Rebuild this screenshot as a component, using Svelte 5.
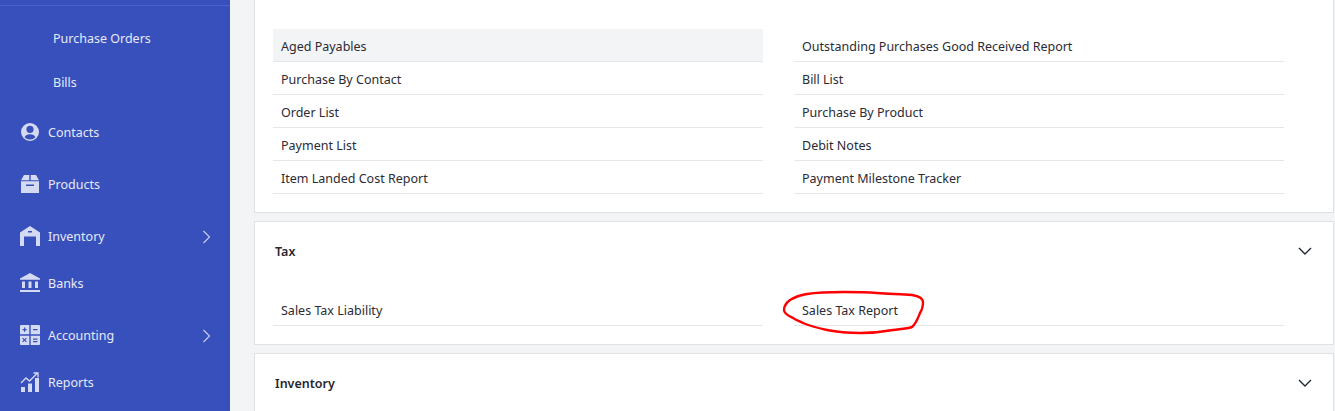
<script>
  const submenu = ['Purchase Orders', 'Bills'];
  const left = ['Aged Payables', 'Purchase By Contact', 'Order List', 'Payment List', 'Item Landed Cost Report'];
  const right = ['Outstanding Purchases Good Received Report', 'Bill List', 'Purchase By Product', 'Debit Notes', 'Payment Milestone Tracker'];
</script>

{#snippet chevron()}
  <svg class="chev" width="16" height="10" viewBox="0 0 16 10" fill="none"><path d="M2 2l6 6 6-6" stroke="#1f2937" stroke-width="1.4"/></svg>
{/snippet}

{#snippet arrow()}
  <svg class="arrow" width="10" height="14" viewBox="0 0 10 14" fill="none"><path d="M2.5 1l6 6-6 6" stroke="#c3cbf0" stroke-width="1.2"/></svg>
{/snippet}

<div class="page">
  <aside class="side">
    <div class="rule"></div>
    <div class="sub">
      {#each submenu as s}<div class="subitem">{s}</div>{/each}
    </div>
    <div class="item first">
      <svg class="ico" viewBox="0 0 20 20"><path fill-rule="evenodd" d="M10 1a9 9 0 1 1 0 18 9 9 0 0 1 0-18zm0 2.700a3.600 3.600 0 1 0 0 7.200 3.600 3.600 0 0 0 0-7.200zM4.600 15.300A7 7 0 0 0 10 17.600a7 7 0 0 0 5.400-2.300c-.7-1.800-2.800-3-5.400-3s-4.700 1.200-5.400 3z"/></svg>
      <span>Contacts</span>
    </div>
    <div class="item gap">
      <svg class="ico" viewBox="0 0 20 20"><path fill-rule="evenodd" d="M4 1h5.300v5.200H1zM10.700 1H16l3 5.200h-8.300zM1 7.300h18V19H1zM6 10.500v1.400h8v-1.400z"/></svg>
      <span>Products</span>
    </div>
    <div class="item gap">
      <svg class="ico" viewBox="0 0 20 20"><path fill-rule="evenodd" d="M10 0l10 6.500V20h-4V10.500H4V20H0V6.500zM8 5v1.400h4V5z"/></svg>
      <span>Inventory</span>{@render arrow()}
    </div>
    <div class="item">
      <svg class="ico" viewBox="0 0 20 20"><path fill-rule="evenodd" d="M10 0l10 5.500v1.300H0V5.500zM2 8.500h3V15H2zM8.500 8.500h3V15h-3zM15 8.500h3V15h-3zM0 17h20v2H0z"/></svg>
      <span>Banks</span>
    </div>
    <div class="item gap">
      <svg class="ico" viewBox="0 0 20 20"><path fill-rule="evenodd" d="M1 0h8.300v9.300H0V1a1 1 0 0 1 1-1zM10.700 0H19a1 1 0 0 1 1 1v8.300h-9.300zM0 10.700h9.300V20H1a1 1 0 0 1-1-1zM10.700 10.700H20V19a1 1 0 0 1-1 1h-8.300zM4 2.500v1.500H2.500v1.200H4v1.500h1.200V5.200h1.500V4H5.200V2.500zM13 4v1.200h4.500V4zM3 12.700l-.8.800 1.500 1.500-1.500 1.500.8.800 1.500-1.500 1.500 1.500.8-.8L5.300 15l1.500-1.500-.8-.8-1.500 1.500zM13 13.500v1.200h4.500v-1.200zM13 16v1.200h4.500V16z"/></svg>
      <span>Accounting</span>{@render arrow()}
    </div>
    <div class="item">
      <svg class="ico" viewBox="0 0 20 20"><path d="M1 15h4v5H1zM8 11.500h4V20H8zM15 6h4v14h-4z"/><path d="M1 11l5-5 3.500 3L17 1.500M13.500 1H18v4.500" fill="none" stroke="#d5daf3" stroke-width="1.300"/></svg>
      <span>Reports</span>
    </div>
  </aside>

  <main class="main">
    <section class="card top">
      <div class="cols">
        <ul>{#each left as l, i}<li class:hl={i === 0}>{l}</li>{/each}</ul>
        <ul>{#each right as r}<li>{r}</li>{/each}</ul>
      </div>
    </section>

    <section class="card">
      <header><h2>Tax</h2>{@render chevron()}</header>
      <div class="cols tax">
        <ul><li>Sales Tax Liability</li></ul>
        <ul><li>Sales Tax Report</li></ul>
      </div>
      <svg class="circle" width="170" height="70" viewBox="0 0 170 70" fill="none">
        <path d="M47 24C60 22 75 22 83 22C95 22 105 22 117 23C130 24 142 24 152 25C158 26 163 28 163 32C163 37 162 40 160 43C158 48 156 54 152 57C146 59 140 59 133 60C122 62 110 63 100 63C88 63 77 62 67 60C58 58 50 56 43 53C39 51 36 50 33 48C29 46 24 44 24 40C24 36 26 33 30 30C35 27 41 25 47 24Z" stroke="#f00" stroke-width="2.400"/>
      </svg>
    </section>

    <section class="card last">
      <header><h2>Inventory</h2>{@render chevron()}</header>
    </section>
  </main>
</div>

<style>
  :global(body) { margin: 0; overflow: hidden; }
  .page {
    display: flex;
    width: 1335px;
    height: 411px;
    overflow: hidden;
    background: #f3f4f6;
    font-family: "Noto Sans", "Open Sans", sans-serif;
    font-size: 12.5px;
  }
  .side {
    flex: 0 0 230px;
    background: #3850bc;
    color: #e6e9f8;
  }
  .rule { height: 5px; border-bottom: 1px solid #4a61c8; }
  .sub { padding-top: 11px; }
  .subitem { height: 44px; line-height: 44px; padding-left: 53px; }
  .item {
    display: flex;
    align-items: center;
    height: 47px;
    padding-left: 20px;
    position: relative;
  }
  .item.first { margin-top: 3.500px; }
  .item.gap { margin-top: 5px; }
  .item span { margin-left: 8px; }
  .ico { width: 20px; height: 20px; fill: #d5daf3; flex: none; }
  .arrow { position: absolute; left: 201px; top: 17px; }
  .main {
    flex: 0 0 1080px;
    margin-left: 24px;
    display: flex;
    flex-direction: column;
    gap: 8px;
  }
  .card {
    position: relative;
    background: #fff;
    border: 1px solid #dfe1e4;
    box-sizing: border-box;
    width: 1080px;
    flex: none;
  }
  .card.top { height: 214px; margin-top: -1px; padding-top: 29px; }
  .card:nth-child(2) { height: 124px; }
  .card.last { height: 80px; }
  header {
    display: flex;
    justify-content: space-between;
    align-items: center;
    height: 58px;
    padding: 0 20px;
  }
  h2 { margin: 0; font-size: 12.5px; font-weight: 600; color: #27272f; }
  .chev { display: block; }
  .cols {
    display: grid;
    grid-template-columns: 490px 490px;
    column-gap: 31px;
    padding-left: 18px;
  }
  .tax { margin-top: 13px; }
  ul { list-style: none; margin: 0; padding: 0; }
  li {
    height: 33px;
    line-height: 35px;
    box-sizing: border-box;
    border-bottom: 1px solid #e5e7eb;
    padding-left: 8px;
    color: #2b2b35;
    white-space: nowrap;
  }
  li.hl { background: #f3f4f6; }
  .circle { position: absolute; left: 505px; top: 48px; pointer-events: none; }
</style>
